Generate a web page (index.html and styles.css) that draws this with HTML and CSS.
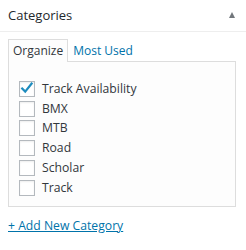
FILE: index.html
```html
<!DOCTYPE html>
<html>
<head>
<meta charset="utf-8">
<link rel="stylesheet" href="styles.css">
</head>
<body>
<div class="box">
  <div class="box-head">
    <h2 class="box-title">Categories</h2>
    <span class="toggle"></span>
  </div>
  <div class="box-body">
    <ul class="tabs">
      <li class="tab active">Organize</li>
      <li class="tab">Most Used</li>
    </ul>
    <div class="panel">
      <ul class="checklist">
        <li class="row"><span class="cb checked"><svg viewBox="0 0 16 16" width="16" height="16"><path d="M3.2 7.6 L6.2 10.6 L12.6 2.6" fill="none" stroke="#1e8cbe" stroke-width="2.2" stroke-linecap="square"/></svg></span><span class="label">Track Availability</span></li>
        <li class="row"><span class="cb"></span><span class="label">BMX</span></li>
        <li class="row"><span class="cb"></span><span class="label">MTB</span></li>
        <li class="row"><span class="cb"></span><span class="label">Road</span></li>
        <li class="row"><span class="cb"></span><span class="label">Scholar</span></li>
        <li class="row"><span class="cb"></span><span class="label">Track</span></li>
      </ul>
    </div>
    <a class="add-link" href="#">+ Add New Category</a>
  </div>
</div>
</body>
</html>
```
FILE: styles.css
```css
html, body {
  margin: 0;
  padding: 0;
  background: #fff;
}
body {
  font-family: "Open Sans", "Liberation Sans", sans-serif;
  font-size: 12px;
  color: #32373c;
}
.box {
  width: 246px;
}
.box-head {
  display: flex;
  align-items: center;
  justify-content: space-between;
  height: 31px;
  border-bottom: 1px solid #eee;
  padding: 0 11px 0 8px;
  box-sizing: content-box;
}
.box-title {
  margin: 0;
  font-size: 13px;
  font-weight: 400;
  line-height: 20px;
  color: #23282d;
  position: relative;
  top: -1px;
}
.toggle {
  width: 0;
  height: 0;
  border-left: 3.5px solid transparent;
  border-right: 3.5px solid transparent;
  border-bottom: 6px solid #72777c;
  position: relative;
  top: -0.5px;
}
.box-body {
  padding: 7px 10px 0 8px;
}
.tabs {
  list-style: none;
  margin: 0;
  padding: 0;
  display: flex;
  height: 22px;
}
.tab {
  padding: 0 4px;
  line-height: 21px;
  color: #0073aa;
  border: 1px solid transparent;
  border-bottom: none;
}
.tab.active {
  color: #32373c;
  border-color: #ddd;
  background: #fdfdfd;
  position: relative;
  z-index: 1;
  margin-bottom: -1px;
  height: 22px;
}
.panel {
  box-sizing: border-box;
  border: 1px solid #ddd;
  background: #fdfdfd;
  height: 146px;
  padding: 17px 10px 0;
}
.checklist {
  list-style: none;
  margin: 0;
  padding: 0;
}
.row {
  display: flex;
  align-items: center;
  height: 19.8px;
}
.cb {
  width: 14px;
  height: 14px;
  border: 1px solid #b4b9be;
  background: #fff;
  box-shadow: inset 0 1px 2px rgba(0,0,0,0.07);
  flex: none;
  position: relative;
  margin-right: 7px;
}
.cb svg {
  position: absolute;
  left: -1px;
  top: -1px;
}
.label {
  line-height: 18px;
  font-size: 12.2px;
}
.add-link {
  display: inline-block;
  margin-top: 10px;
  color: #0073aa;
  text-decoration: underline;
  line-height: 18px;
  font-size: 12.2px;
}
```
